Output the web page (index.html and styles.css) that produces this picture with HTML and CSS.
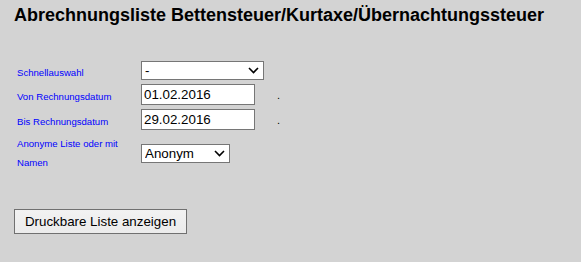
FILE: index.html
```html
<!DOCTYPE html>
<html lang="de">
<head>
  <meta charset="UTF-8" />
  <title>Abrechnungsliste Bettensteuer/Kurtaxe/Übernachtungssteuer</title>
  <link rel="stylesheet" href="styles.css">
</head>
<body>
  <h1 class="title">Abrechnungsliste Bettensteuer/Kurtaxe/Übernachtungssteuer</h1>

  <form class="filter-form">
    <label class="field-label" for="quick">Schnellauswahl</label>
    <div class="select-box quick-select">
      <select id="quick"><option>-</option></select>
      <svg class="chevron" width="11" height="7" viewBox="0 0 11 7"><polyline points="1,1 5.5,5.5 10,1" fill="none" stroke="#000" stroke-width="1.6"/></svg>
    </div>
    <span></span>

    <label class="field-label" for="from">Von Rechnungsdatum</label>
    <input id="from" class="date-input" type="text" value="01.02.2016">
    <span class="field-dot">.</span>

    <label class="field-label" for="to">Bis Rechnungsdatum</label>
    <input id="to" class="date-input" type="text" value="29.02.2016">
    <span class="field-dot">.</span>

    <label class="field-label two-line" for="mode">Anonyme Liste oder mit Namen</label>
    <div class="select-box mode-select">
      <select id="mode"><option>Anonym</option></select>
      <svg class="chevron" width="11" height="7" viewBox="0 0 11 7"><polyline points="1,1 5.5,5.5 10,1" fill="none" stroke="#000" stroke-width="1.6"/></svg>
    </div>
    <span></span>
  </form>

  <button class="print-button" type="button">Druckbare Liste anzeigen</button>
</body>
</html>
```

FILE: styles.css
```css
body {
  font-family: "Liberation Sans", Arial, sans-serif;
  margin: 0;
  padding: 5px 14px;
  background-color: #d3d3d3;
}
.title {
  font-size: 18px;
  font-weight: bold;
  margin: 0;
  color: #000;
}
.filter-form {
  display: grid;
  grid-template-columns: 124px 136px auto;
  row-gap: 4px;
  align-items: center;
  margin: 35px 0 0 3px;
}
.field-label {
  color: #0000ff;
  font-size: 9.6px;
  line-height: 15px;
  padding-top: 4px;
}
.field-label.two-line {
  line-height: 19px;
  padding-top: 0;
  padding-right: 4px;
}
.field-dot {
  color: #000;
  font-size: 11px;
  line-height: 15px;
  padding-top: 2px;
}
.select-box {
  position: relative;
  height: 19px;
}
.select-box select {
  appearance: none;
  -webkit-appearance: none;
  width: 100%;
  height: 19px;
  margin: 0;
  padding: 0 0 0 3px;
  border: 1px solid #767676;
  border-radius: 0;
  background: #fff;
  font-family: "Liberation Sans", Arial, sans-serif;
  font-size: 13.33px;
  color: #000;
}
.quick-select {
  width: 123px;
}
.mode-select {
  width: 89px;
}
.chevron {
  position: absolute;
  right: 5px;
  top: 6px;
}
.date-input {
  width: 114px;
  height: 21px;
  box-sizing: border-box;
  margin: 0;
  padding: 0 2px;
  border: 1px solid #767676;
  background: #fff;
  font-family: "Liberation Sans", Arial, sans-serif;
  font-size: 13.33px;
  color: #000;
}
.print-button {
  display: block;
  margin-top: 37px;
  width: 173px;
  height: 25px;
  padding: 0 6px;
  border: 1px solid #707070;
  border-radius: 0;
  background: linear-gradient(#f2f2f2, #ebebeb);
  font-family: "Liberation Sans", Arial, sans-serif;
  font-size: 13.33px;
  color: #000;
  white-space: nowrap;
}
```
